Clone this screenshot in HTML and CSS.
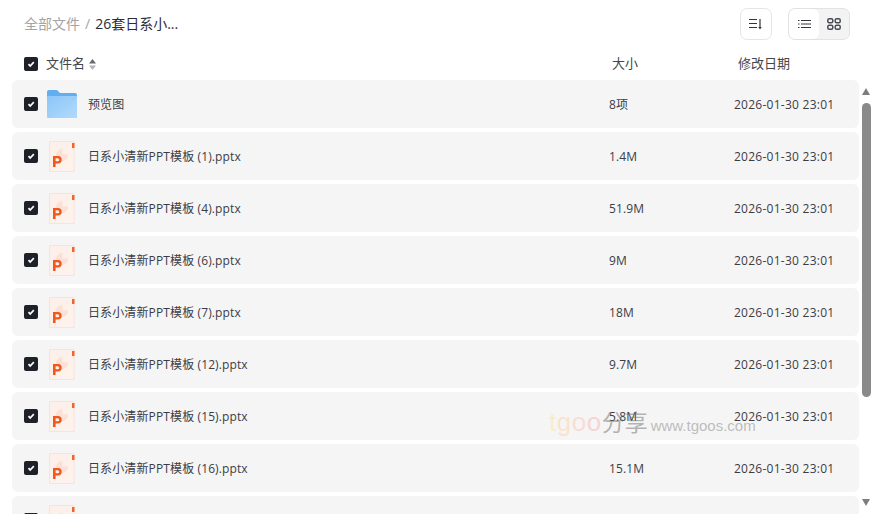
FILE: index.html
```html
<!DOCTYPE html>
<html lang="zh-CN">
<head>
<meta charset="utf-8">
<title>26套日系小清新PPT模板</title>
<link rel="stylesheet" href="styles.css">
</head>
<body>
<svg class="defs" width="0" height="0" aria-hidden="true">
  <defs>
    <symbol id="check" viewBox="0 0 14 14"><rect width="14" height="14" rx="2" fill="#1f2129"/><path d="M4.500 7.200 6.200 9 9.800 5.200" fill="none" stroke="#fff" stroke-width="1.700"/></symbol>
    <linearGradient id="fold" x1="0" y1="0" x2="1" y2="1"><stop offset="0" stop-color="#8cc6f8"/><stop offset="1" stop-color="#b2dafc"/></linearGradient>
    <linearGradient id="sheet" x1="0" y1="0" x2="1" y2="1"><stop offset="0" stop-color="#fdeee8"/><stop offset="1" stop-color="#fdf3ee"/></linearGradient>
    <symbol id="folder" viewBox="0 0 30 28">
      <path d="M0 2a2 2 0 0 1 2-2h8l3 3h15a2 2 0 0 1 2 2v21a2 2 0 0 1-2 2H2a2 2 0 0 1-2-2z" fill="#62aff0"/>
      <path d="M1 6h28a1 1 0 0 1 1 1v19a2 2 0 0 1-2 2H2a2 2 0 0 1-2-2V7a1 1 0 0 1 1-1z" fill="url(#fold)"/>
      <rect x="23" y="8" width="5" height="2" fill="#9fcbf2"/>
    </symbol>
    <symbol id="ppt" viewBox="0 0 26 31">
      <path d="M.5.5h24.500v30H.5z" fill="url(#sheet)" stroke="#fbe2d8"/>
      <path d="M23 2h2.500v5H23z" fill="#f2642a"/>
      <circle cx="13" cy="14" r="6" fill="#fbe0d5"/>
      <path d="M13.500 13.500V8a6 6 0 0 1 5.500 5.500z" fill="#fdf0ea"/>
      <path d="M4 26V15h5a3.700 3.700 0 0 1 0 7.400H6.600V26zM6.600 17.200v3h2.200a1.500 1.500 0 0 0 0-3z" fill="#f0581c" fill-rule="evenodd"/>
    </symbol>
  </defs>
</svg>
<main class="page">
  <header class="top">
    <nav class="crumbs">
      <span class="crumb-root">全部文件</span>
      <span class="crumb-sep">/</span>
      <span class="crumb-cur">26套日系小...</span>
    </nav>
    <div class="tools">
      <button class="tool-btn" aria-label="排序">
        <svg width="14" height="12" viewBox="0 0 14 12"><path d="M0 1.500h8M0 5.500h8M0 9.500h8" stroke="#33353c" stroke-width="1.200"/><path d="M11 1v9" stroke="#33353c" stroke-width="1.200"/><path d="M9.300 9h3.400L11 11.500z" fill="#33353c"/></svg>
      </button>
      <div class="view-switch">
        <button class="view-btn view-on" aria-label="列表">
          <svg width="13" height="10" viewBox="0 0 13 10"><path d="M3 1.500h10M3 5h10M3 8.500h10" stroke="#33353c"/><path d="M0 1.500h1.500M0 5h1.500M0 8.500h1.500" stroke="#33353c"/></svg>
        </button>
        <button class="view-btn" aria-label="网格">
          <svg width="14" height="12" viewBox="0 0 14 12"><g fill="none" stroke="#4a4c53" stroke-width="1.500"><rect x=".8" y=".8" width="5" height="4" rx="1.500"/><rect x="8.200" y=".8" width="5" height="4" rx="1.500"/><rect x=".8" y="7.200" width="5" height="4" rx="1.500"/><rect x="8.200" y="7.200" width="5" height="4" rx="1.500"/></g></svg>
        </button>
      </div>
    </div>
  </header>
  <div class="head-row">
    <svg class="chk"><use href="#check"/></svg>
    <span class="head-name">文件名</span>
    <svg class="sort" width="7" height="11" viewBox="0 0 7 11"><path d="M3.500 0 7 4.500H0z" fill="#66686e"/><path d="M3.500 11 0 6.500h7z" fill="#b4b5b8"/></svg>
    <span class="head-size">大小</span>
    <span class="head-date">修改日期</span>
  </div>
  <div class="body">
    <div class="list">
      <div class="row"><svg class="chk"><use href="#check"/></svg><svg class="ico-folder"><use href="#folder"/></svg><span class="name">预览图</span><span class="size">8项</span><span class="date">2026-01-30 23:01</span></div>
      <div class="row"><svg class="chk"><use href="#check"/></svg><svg class="ico-ppt"><use href="#ppt"/></svg><span class="name">日系小清新PPT模板 (1).pptx</span><span class="size">1.4M</span><span class="date">2026-01-30 23:01</span></div>
      <div class="row"><svg class="chk"><use href="#check"/></svg><svg class="ico-ppt"><use href="#ppt"/></svg><span class="name">日系小清新PPT模板 (4).pptx</span><span class="size">51.9M</span><span class="date">2026-01-30 23:01</span></div>
      <div class="row"><svg class="chk"><use href="#check"/></svg><svg class="ico-ppt"><use href="#ppt"/></svg><span class="name">日系小清新PPT模板 (6).pptx</span><span class="size">9M</span><span class="date">2026-01-30 23:01</span></div>
      <div class="row"><svg class="chk"><use href="#check"/></svg><svg class="ico-ppt"><use href="#ppt"/></svg><span class="name">日系小清新PPT模板 (7).pptx</span><span class="size">18M</span><span class="date">2026-01-30 23:01</span></div>
      <div class="row"><svg class="chk"><use href="#check"/></svg><svg class="ico-ppt"><use href="#ppt"/></svg><span class="name">日系小清新PPT模板 (12).pptx</span><span class="size">9.7M</span><span class="date">2026-01-30 23:01</span></div>
      <div class="row"><svg class="chk"><use href="#check"/></svg><svg class="ico-ppt"><use href="#ppt"/></svg><span class="name">日系小清新PPT模板 (15).pptx</span><span class="size">5.8M</span><span class="date">2026-01-30 23:01</span></div>
      <div class="row"><svg class="chk"><use href="#check"/></svg><svg class="ico-ppt"><use href="#ppt"/></svg><span class="name">日系小清新PPT模板 (16).pptx</span><span class="size">15.1M</span><span class="date">2026-01-30 23:01</span></div>
      <div class="row"><svg class="chk"><use href="#check"/></svg><svg class="ico-ppt"><use href="#ppt"/></svg></div>
    </div>
    <div class="scrollbar">
      <span class="arrow-up"></span>
      <span class="thumb"></span>
      <span class="arrow-down"></span>
    </div>
  </div>
  <div class="watermark"><span class="wm-logo"><span class="wm-t">t</span><span class="wm-g">g</span><span class="wm-o1">o</span><span class="wm-o2">o</span></span><span class="wm-cn">分享</span><span class="wm-url">www.tgoos.com</span></div>
</main>
</body>
</html>
```

FILE: styles.css
```css
* { box-sizing: border-box; }
html, body { margin: 0; height: 100%; overflow: hidden; background: #fff; }
body { font-family: "Open Sans", "Noto Sans CJK SC", sans-serif; font-size: 12px; color: #3b3d45; }
.defs { position: absolute; }
.page { position: relative; height: 514px; overflow: hidden; display: flex; flex-direction: column; }

.top { height: 48px; flex: none; display: flex; align-items: center; justify-content: space-between; padding: 0 24px; }
.crumbs { display: flex; align-items: center; font-size: 14px; line-height: 20px; padding-bottom: 1px; }
.crumb-root { color: #a3a4a8; }
.crumb-sep { color: #a3a4a8; margin: 0 5px; }
.crumb-cur { color: #2b2d35; }
.tools { display: flex; gap: 16px; }
.tool-btn { width: 32px; height: 32px; padding: 0; border: 1px solid #e6e6e8; border-radius: 7px; background: #fff; display: flex; align-items: center; justify-content: center; }
.view-switch { width: 62px; height: 32px; display: flex; border: 1px solid #e2e2e4; border-radius: 7px; background: #f3f3f4; overflow: hidden; }
.view-btn { flex: 1; padding: 0; border: 0; background: transparent; display: flex; align-items: center; justify-content: center; }
.view-on { background: #fff; border-radius: 6px; }

.head-row { height: 32px; flex: none; display: flex; align-items: center; padding-left: 24px; font-size: 13px; color: #44464d; }
.head-name, .head-size, .head-date { padding-bottom: 4px; }
.head-name { margin-left: 8px; }
.sort { margin-left: 4px; }
.head-size { margin-left: 516px; }
.head-date { margin-left: 100px; }

.chk { width: 14px; height: 14px; flex: none; }
.body { flex: 1; min-height: 0; display: flex; }
.list { flex: none; width: 860px; padding-left: 12px; padding-right: 1px; display: flex; flex-direction: column; gap: 4px; }
.row { height: 48px; flex: none; display: flex; align-items: center; padding-left: 12px; background: #f5f5f5; border-radius: 6px; }
.ico-folder { width: 30px; height: 28px; margin-left: 9px; flex: none; }
.ico-ppt { width: 26px; height: 31px; margin-left: 11px; margin-top: 1px; flex: none; }
.ico-folder + .name { margin-left: 11px; }
.ico-ppt + .name { margin-left: 13px; }
.name { width: 521px; flex: none; color: #3b3d45; letter-spacing: .12px; }
.size { width: 125px; flex: none; letter-spacing: .1px; }
.date { flex: none; letter-spacing: .26px; }

.scrollbar { flex: none; width: 14px; display: flex; flex-direction: column; align-items: flex-start; padding: 8px 0 0 2px; }
.arrow-up { width: 0; height: 0; border: 4.5px solid transparent; border-top: 0; border-bottom: 7px solid #7d7d7d; }
.thumb { width: 9px; height: 294px; margin-top: 8px; background: #8a8a8a; border-radius: 5px; }
.arrow-down { width: 0; height: 0; margin-top: 102px; border: 4.5px solid transparent; border-bottom: 0; border-top: 7px solid #7d7d7d; }

.watermark { position: absolute; left: 549px; top: 404px; display: flex; align-items: baseline; pointer-events: none; white-space: nowrap; }
.wm-logo { font-size: 26px; letter-spacing: .5px; font-family: "Liberation Sans", sans-serif; }
.wm-t { color: rgba(255, 225, 150, .45); }
.wm-g { color: rgba(255, 205, 150, .45); }
.wm-o1 { color: rgba(255, 190, 170, .45); }
.wm-o2 { color: rgba(250, 170, 170, .45); }
.wm-cn { font-size: 23px; color: rgba(120, 120, 120, .55); }
.wm-url { font-size: 15px; color: rgba(130, 130, 130, .5); margin-left: 3px; font-family: "Liberation Sans", sans-serif; }
```
